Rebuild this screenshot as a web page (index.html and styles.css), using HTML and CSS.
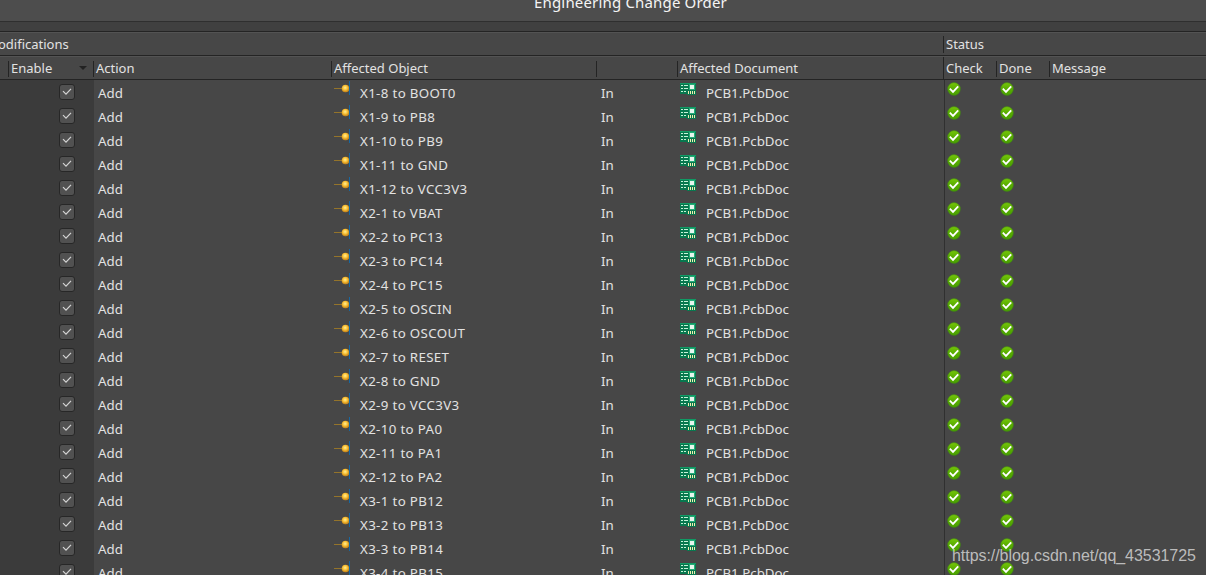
FILE: index.html
```
<!DOCTYPE html>
<html lang="en">
<head>
    <meta charset="UTF-8">
    <title>Engineering Change Order</title>
    <link rel="stylesheet" href="styles.css">
</head>
<body>
    <svg class="sprites">
        <defs>
            <radialGradient id="gold" cx="45%" cy="40%">
                <stop offset="0" stop-color="#ffee98"/>
                <stop offset="0.6" stop-color="#f8c136"/>
                <stop offset="1" stop-color="#d0901e"/>
            </radialGradient>
            <linearGradient id="green" x1="0" y1="0" x2="0" y2="1">
                <stop offset="0" stop-color="#76c808"/>
                <stop offset="0.5" stop-color="#58ac02"/>
                <stop offset="1" stop-color="#48a000"/>
            </linearGradient>
        </defs>
        <symbol id="icon-box" viewBox="0 0 16 16">
            <rect x="0.5" y="0.5" width="15" height="15" rx="2.5" fill="#515151" stroke="#272727"/>
            <path d="M4 7.2l3 3 5-5.4" fill="none" stroke="#d4d4d4" stroke-width="1.2"/>
        </symbol>
        <symbol id="icon-pin" viewBox="0 0 16 16">
            <path d="M0 8.5h9" stroke="#94742a"/>
            <circle cx="11.5" cy="8.5" r="3.8" fill="url(#gold)"/>
            <path d="M15.5 1v14" stroke="#1767a0"/>
        </symbol>
        <symbol id="icon-pcb" viewBox="0 0 16 12">
            <path d="M0 0h16v12H7v-1H0z" fill="#08784f"/>
            <path d="M0 .5h16" stroke="#109a64"/>
            <path d="M1 2.5h2M4 2.5h4M1 5.5h2M4 5.5h4M1 8.5h2M4 8.5h2" stroke="#c4f3d8"/>
            <rect x="9.5" y="1.5" width="5" height="5" fill="#e8f6ee" stroke="#25ad78"/>
            <path d="M8.5 8v3M10.5 8v3M12.5 8v3M14.5 8v3" stroke="#f2edb0"/>
        </symbol>
        <symbol id="icon-ok" viewBox="0 0 14 14">
            <circle cx="7" cy="7" r="6.4" fill="url(#green)" stroke="#3e7c1c" stroke-width="0.6"/>
            <path d="M2.8 6.7l3.2 3.2 5.2-5.6" fill="none" stroke="#fff" stroke-width="1.8"/>
        </symbol>
    </svg>

    <div class="window">
        <div class="title">Engineering Change Order</div>
        <div class="toolbar"></div>
        <div class="group-row">
            <div class="group-mods">odifications</div>
            <div class="group-status">Status</div>
        </div>
        <div class="columns head">
            <div></div>
            <div class="col sortable">Enable<span class="arrow"></span></div>
            <div class="col">Action</div>
            <div class="col">Affected Object</div>
            <div class="col"></div>
            <div class="col">Affected Document</div>
            <div class="col full">Check</div>
            <div class="col">Done</div>
            <div class="col">Message</div>
        </div>
        <div id="rows"></div>
    </div>
    <div class="watermark">https://blog.csdn.net/qq_43531725</div>

    <script>
        const objects = [
            'X1-8 to BOOT0', 'X1-9 to PB8', 'X1-10 to PB9', 'X1-11 to GND', 'X1-12 to VCC3V3',
            'X2-1 to VBAT', 'X2-2 to PC13', 'X2-3 to PC14', 'X2-4 to PC15', 'X2-5 to OSCIN',
            'X2-6 to OSCOUT', 'X2-7 to RESET', 'X2-8 to GND', 'X2-9 to VCC3V3', 'X2-10 to PA0',
            'X2-11 to PA1', 'X2-12 to PA2', 'X3-1 to PB12', 'X3-2 to PB13', 'X3-3 to PB14', 'X3-4 to PB15'
        ];
        const icon = name => `<svg class="${name}"><use href="#icon-${name}"/></svg>`;

        document.getElementById('rows').innerHTML = objects.map(name => `
            <div class="columns row">
                <div class="enable">${icon('box')}</div>
                <div class="action">Add</div>
                <div class="cell object">${icon('pin')}<span>${name}</span></div>
                <div class="in">In</div>
                <div class="cell doc">${icon('pcb')}<span>PCB1.PcbDoc</span></div>
                <div class="check">${icon('ok')}</div>
                <div class="done">${icon('ok')}</div>
                <div></div>
            </div>`).join('');
    </script>
</body>
</html>
```

FILE: styles.css
```
* {
    box-sizing: border-box;
}
body {
    margin: 0;
    height: 575px;
    overflow: hidden;
    background: #474747;
    color: #e2e2e2;
    font-family: "Noto Sans", sans-serif;
    font-size: 13px;
}
.sprites {
    position: absolute;
    width: 0;
    height: 0;
}
svg {
    display: block;
    flex: none;
}
.window {
    height: 575px;
    overflow: hidden;
}
.title {
    height: 22px;
    padding-left: 55px;
    background: #4d4d4d;
    border-bottom: 1px solid #2f2f2f;
    color: #f4f4f4;
    font-size: 15px;
    letter-spacing: 0.17px;
    line-height: 4px;
    text-align: center;
}
.toolbar {
    height: 10px;
    background: #404040;
    border-bottom: 1px solid #242424;
}
.group-row {
    display: flex;
    height: 24px;
    border-top: 1px solid #535353;
    border-bottom: 1px solid #242424;
    line-height: 23px;
}
.group-mods {
    width: 943px;
    text-indent: -2px;
}
.group-status {
    height: 17px;
    margin-top: 3px;
    padding-left: 2px;
    border-left: 1px solid #242424;
    line-height: 17px;
}
.columns {
    display: grid;
    height: 24px;
}
.head {
    grid-template-columns: 8px 85px 238px 265px 81px 266px 53px 53px 1fr;
    border-top: 1px solid #535353;
    border-bottom: 1px solid #242424;
}
.col {
    height: 16px;
    margin-top: 4px;
    padding-left: 2px;
    border-left: 1px solid #242424;
    line-height: 14px;
    white-space: nowrap;
}
.full {
    height: 22px;
    margin-top: 0;
    line-height: 22px;
}
.sortable {
    display: flex;
    justify-content: space-between;
}
.arrow {
    margin: 5px 6px 0 0;
    height: 4px;
    border: 4px solid transparent;
    border-top-color: #222;
    border-bottom: 0;
}
.row {
    grid-template-columns: 94px 240px 267px 79px 264px 53px 53px 1fr;
    font-size: 13.3px;
    line-height: 26px;
}
.enable {
    padding: 4px 0 0 59px;
    background: #3b3b3b;
}
.action {
    padding-left: 4px;
}
.cell {
    display: flex;
}
.object span,
.doc span {
    padding-left: 10px;
}
.object span {
    letter-spacing: 0.35px;
}
.box {
    width: 16px;
    height: 16px;
}
.pin {
    width: 16px;
    height: 16px;
}
.pcb {
    width: 16px;
    height: 12px;
    margin-top: 3px;
}
.check {
    padding: 1.5px 0 0 1.5px;
    border-left: 1px solid #303030;
}
.done {
    padding: 1.5px 0 0 2.5px;
}
.ok {
    width: 14px;
    height: 14px;
}
.watermark {
    position: absolute;
    left: 952px;
    top: 545px;
    color: rgba(220, 220, 220, 0.8);
    font-family: "Liberation Sans", Arial, sans-serif;
    font-size: 16px;
    letter-spacing: -0.05px;
    line-height: 22px;
    white-space: nowrap;
}
```
